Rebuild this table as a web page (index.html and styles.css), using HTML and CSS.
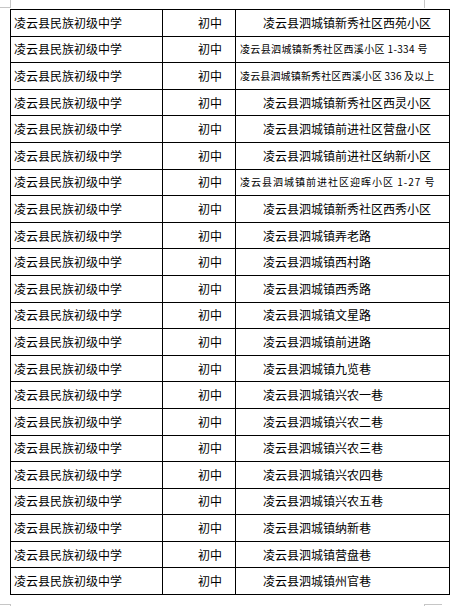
FILE: index.html
```html
<!DOCTYPE html>
<html lang="zh">
<head>
<meta charset="utf-8">
<link rel="stylesheet" href="styles.css">
</head>
<body>
<div class="mark mark-tl"></div>
<div class="mark mark-tr"></div>
<div class="mark mark-bl"></div>
<div class="mark mark-br"></div>
<table class="sheet">
<colgroup><col class="c1"><col class="c2"><col class="c3"></colgroup>
<tbody>
<tr><td class="school">凌云县民族初级中学</td><td class="level">初中</td><td class="addr">凌云县泗城镇新秀社区西苑小区</td></tr>
<tr><td class="school">凌云县民族初级中学</td><td class="level">初中</td><td class="addr small">凌云县泗城镇新秀社区西溪小区 1-334 号</td></tr>
<tr><td class="school">凌云县民族初级中学</td><td class="level">初中</td><td class="addr small tight">凌云县泗城镇新秀社区西溪小区 336 及以上</td></tr>
<tr><td class="school">凌云县民族初级中学</td><td class="level">初中</td><td class="addr">凌云县泗城镇新秀社区西灵小区</td></tr>
<tr><td class="school">凌云县民族初级中学</td><td class="level">初中</td><td class="addr">凌云县泗城镇前进社区营盘小区</td></tr>
<tr><td class="school">凌云县民族初级中学</td><td class="level">初中</td><td class="addr">凌云县泗城镇前进社区纳新小区</td></tr>
<tr><td class="school">凌云县民族初级中学</td><td class="level">初中</td><td class="addr small wide">凌云县泗城镇前进社区迎晖小区 1-27 号</td></tr>
<tr><td class="school">凌云县民族初级中学</td><td class="level">初中</td><td class="addr">凌云县泗城镇新秀社区西秀小区</td></tr>
<tr><td class="school">凌云县民族初级中学</td><td class="level">初中</td><td class="addr">凌云县泗城镇弄老路</td></tr>
<tr><td class="school">凌云县民族初级中学</td><td class="level">初中</td><td class="addr">凌云县泗城镇西村路</td></tr>
<tr><td class="school">凌云县民族初级中学</td><td class="level">初中</td><td class="addr">凌云县泗城镇西秀路</td></tr>
<tr><td class="school">凌云县民族初级中学</td><td class="level">初中</td><td class="addr">凌云县泗城镇文星路</td></tr>
<tr><td class="school">凌云县民族初级中学</td><td class="level">初中</td><td class="addr">凌云县泗城镇前进路</td></tr>
<tr><td class="school">凌云县民族初级中学</td><td class="level">初中</td><td class="addr">凌云县泗城镇九览巷</td></tr>
<tr><td class="school">凌云县民族初级中学</td><td class="level">初中</td><td class="addr">凌云县泗城镇兴农一巷</td></tr>
<tr><td class="school">凌云县民族初级中学</td><td class="level">初中</td><td class="addr">凌云县泗城镇兴农二巷</td></tr>
<tr><td class="school">凌云县民族初级中学</td><td class="level">初中</td><td class="addr">凌云县泗城镇兴农三巷</td></tr>
<tr><td class="school">凌云县民族初级中学</td><td class="level">初中</td><td class="addr">凌云县泗城镇兴农四巷</td></tr>
<tr><td class="school">凌云县民族初级中学</td><td class="level">初中</td><td class="addr">凌云县泗城镇兴农五巷</td></tr>
<tr><td class="school">凌云县民族初级中学</td><td class="level">初中</td><td class="addr">凌云县泗城镇纳新巷</td></tr>
<tr><td class="school">凌云县民族初级中学</td><td class="level">初中</td><td class="addr">凌云县泗城镇营盘巷</td></tr>
<tr><td class="school">凌云县民族初级中学</td><td class="level">初中</td><td class="addr">凌云县泗城镇州官巷</td></tr>
</tbody>
</table>
</body>
</html>
```
FILE: styles.css
```css
html, body {
  margin: 0;
  padding: 0;
  background: #ffffff;
}
body {
  position: relative;
  width: 455px;
  height: 606px;
  overflow: hidden;
  padding: 9px 0 0 10px;
  box-sizing: border-box;
  font-family: "Noto Sans CJK SC", "Noto Sans", sans-serif;
  font-size: 12px;
  color: #000000;
}
.sheet {
  border-collapse: collapse;
  table-layout: fixed;
  width: 439px;
}
.c1 { width: 152px; }
.c2 { width: 73px; }
.c3 { width: 214px; }
.sheet tr {
  height: 26.6px;
}
.sheet td {
  border: 1px solid #000000;
  padding: 0;
  vertical-align: middle;
  line-height: 14px;
  white-space: nowrap;
  overflow: hidden;
}
.school {
  padding-left: 3px !important;
  text-align: left;
}
.level {
  text-align: right;
  padding-right: 13px !important;
}
.addr {
  padding-left: 27px !important;
  text-align: left;
}
.addr.small {
  padding-left: 4px !important;
  font-size: 10px;
  letter-spacing: 0.35px;
}
.addr.small.tight {
  letter-spacing: 0.15px;
}
.addr.small.wide {
  letter-spacing: 1px;
}
.mark {
  position: absolute;
  border-color: #c6c6c6;
  border-style: solid;
  border-width: 0;
}
.mark-tl {
  left: 0;
  top: 0;
  width: 10px;
  height: 7px;
  border-right-width: 1px;
  border-bottom-width: 1px;
}
.mark-tr {
  left: 424px;
  top: 0;
  width: 0;
  height: 8px;
  border-left-width: 1px;
}
.mark-bl {
  left: 0;
  top: 604px;
  width: 10px;
  height: 4px;
  border-top-width: 1px;
  border-right-width: 1px;
}
.mark-br {
  left: 424px;
  top: 604px;
  width: 17px;
  height: 4px;
  border-top-width: 1px;
  border-left-width: 1px;
}
```
